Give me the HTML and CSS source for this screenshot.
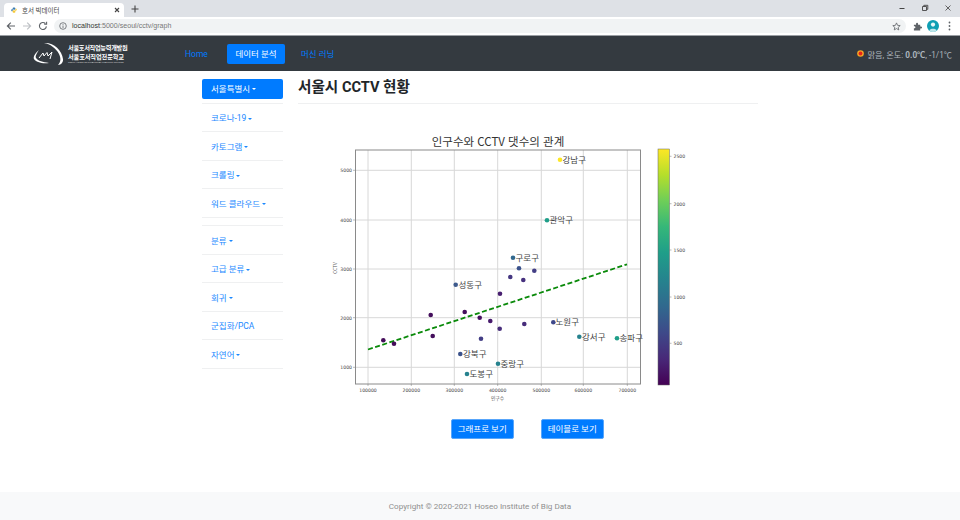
FILE: index.html
```html
<!DOCTYPE html>
<html lang="ko">
<head>
  <meta charset="UTF-8" />
  <title>호서 빅데이터</title>
  <link rel="stylesheet" href="styles.css">
</head>
<body>
  <div class="tabstrip">
    <div class="tab">
      <svg class="favicon" width="6" height="6" viewBox="0 0 8 8">
        <path d="M4 0.5C2.6 0.5 2.2 1 2.2 1.8V2.6H4.2V3H1.4C0.6 3 0.3 3.6 0.3 4.2S0.6 5.6 1.4 5.6H2.2V4.6C2.2 4 2.7 3.6 3.2 3.6H5C5.5 3.6 5.8 3.2 5.8 2.8V1.8C5.8 1 5.2 0.5 4 0.5Z" fill="#3b7cb0"/>
        <path d="M4 7.5C5.4 7.5 5.8 7 5.8 6.2V5.4H3.8V5H6.6C7.4 5 7.7 4.4 7.7 3.8S7.4 2.4 6.6 2.4H6V3.4C6 4 5.4 4.4 4.9 4.4H3C2.5 4.4 2.2 4.8 2.2 5.2V6.2C2.2 7 2.8 7.5 4 7.5Z" fill="#f5c93a"/>
      </svg>
      <span class="tab-title">호서 빅데이터</span>
      <svg class="tab-close" width="6" height="6" viewBox="0 0 6 6"><path d="M1 1L5 5M5 1L1 5" stroke="#444" stroke-width="1.1"/></svg>
    </div>
    <svg class="new-tab" width="8" height="8" viewBox="0 0 8 8"><path d="M4 0.5V7.5M0.5 4H7.5" stroke="#444" stroke-width="1.1"/></svg>
    <div class="win-controls">
      <svg width="8" height="8" viewBox="0 0 8 8"><path d="M1.5 4.5H6.5" stroke="#444"/></svg>
      <svg width="8" height="8" viewBox="0 0 8 8"><path d="M1.5 2.5H5.5V6.5H1.5ZM2.8 2.5V1.3H6.8V5.3H5.5" fill="none" stroke="#444" stroke-width="0.9"/></svg>
      <svg width="8" height="8" viewBox="0 0 8 8"><path d="M1.5 1.5L6.5 6.5M6.5 1.5L1.5 6.5" stroke="#555" stroke-width="0.9"/></svg>
    </div>
  </div>

  <div class="toolbar">
    <svg class="tool-icon" width="10" height="10" viewBox="0 0 10 10"><path d="M9 5H1.6M4.8 1.6L1.4 5L4.8 8.4" fill="none" stroke="#5f6368" stroke-width="1.2"/></svg>
    <svg class="tool-icon" width="10" height="10" viewBox="0 0 10 10"><path d="M1 5H8.4M5.2 1.6L8.6 5L5.2 8.4" fill="none" stroke="#bfc2c6" stroke-width="1.2"/></svg>
    <svg class="tool-icon" width="10" height="10" viewBox="0 0 10 10"><path d="M8.4 5.4A3.5 3.5 0 1 1 7.4 2.5M8.6 0.8V3.2H6.2" fill="none" stroke="#5f6368" stroke-width="1.1"/></svg>
    <div class="address">
      <svg width="8" height="8" viewBox="0 0 8 8"><circle cx="4" cy="4" r="3.3" fill="none" stroke="#5f6368" stroke-width="0.8"/><path d="M4 3.5V6M4 2V2.8" stroke="#5f6368" stroke-width="0.8"/></svg>
      <span class="url"><b>localhost</b>:5000/seoul/cctv/graph</span>
      <svg class="star" width="9" height="9" viewBox="0 0 10 10"><path d="M5 1L6.2 3.7L9.1 4L6.9 5.9L7.5 8.8L5 7.3L2.5 8.8L3.1 5.9L0.9 4L3.8 3.7Z" fill="none" stroke="#5f6368" stroke-width="0.9"/></svg>
    </div>
    <svg class="tool-right" width="9" height="9" viewBox="0 0 10 10"><path d="M1 3H3.4V2A1.1 1.1 0 0 1 5.6 2V3H8V5H9A1.1 1.1 0 0 1 9 7.2H8V9.4H1V7H2A1.2 1.2 0 0 0 2 4.8H1Z" fill="#5f6368"/></svg>
    <svg class="avatar" width="12" height="12" viewBox="0 0 12 12"><circle cx="6" cy="6" r="6" fill="#0f9fb3"/><circle cx="6" cy="4.6" r="2.1" fill="#e8f6f8"/><path d="M2.2 10.4C3 8.2 9 8.2 9.8 10.4A6 6 0 0 1 2.2 10.4Z" fill="#bfe6ea"/></svg>
    <svg class="menu-dots" width="3" height="10" viewBox="0 0 3 10"><circle cx="1.5" cy="1.5" r="0.9" fill="#5f6368"/><circle cx="1.5" cy="5" r="0.9" fill="#5f6368"/><circle cx="1.5" cy="8.5" r="0.9" fill="#5f6368"/></svg>
  </div>

  <nav class="navbar">
    <a class="brand" href="#">
      <svg width="31" height="24" viewBox="0 0 31 24">
        <path d="M11 1C20 0 29 8 30 17C30.500 20 28 23 25 23C28 20 28 16 26 12C23 6 17 2 11 1Z" fill="#fff"/>
        <path d="M6 8C2 11 0 15 1 17C3 20 9 22 16 21C10 20 5 19 3 16C2 14 4 11 6 8Z" fill="#fff"/>
        <path d="M6 16L10 11L11 14L14 10.500L15 14L19 10L17 17" fill="none" stroke="#fff" stroke-width="1"/>
      </svg>
      <span class="brand-text">
        <span class="brand-line">서울호서직업능력개발원</span>
        <span class="brand-line brand-line-wide">서울호서직업전문학교</span>
        <span class="brand-small">SEOUL HOSEO OCCUPATIONAL TRAINING COLLEGE</span>
      </span>
    </a>
    <a class="nav-link nav-home" href="#">Home</a>
    <a class="nav-link nav-active" href="#">데이터 분석</a>
    <a class="nav-link" href="#">머신 러닝</a>
    <div class="weather">
      <svg width="7" height="7" viewBox="0 0 8 8"><circle cx="4" cy="4" r="3.8" fill="#f5a623"/><circle cx="4" cy="4" r="2.2" fill="#e5231b"/></svg>
      <span>맑음, 온도: <b>0.0℃</b>, -1/1℃</span>
    </div>
  </nav>

  <div class="container">
    <aside class="sidebar">
      <ul class="side-group">
        <li class="side-item side-first"><a class="side-active caret" href="#">서울특별시</a></li>
        <li class="side-item"><a class="caret" href="#">코로나-19</a></li>
        <li class="side-item"><a class="caret" href="#">카토그램</a></li>
        <li class="side-item"><a class="caret" href="#">크롤링</a></li>
        <li class="side-item"><a class="caret" href="#">워드 클라우드</a></li>
      </ul>
      <ul class="side-group side-second">
        <li class="side-item"><a class="caret" href="#">분류</a></li>
        <li class="side-item"><a class="caret" href="#">고급 분류</a></li>
        <li class="side-item"><a class="caret" href="#">회귀</a></li>
        <li class="side-item"><a href="#">군집화/PCA</a></li>
        <li class="side-item"><a class="caret" href="#">자연어</a></li>
      </ul>
    </aside>

    <main class="content">
      <h1 class="page-title">서울시 CCTV 현황</h1>

      <svg class="chart" width="400" height="274" viewBox="328 130 400 274">
        <defs>
          <linearGradient id="viridis" x1="0" y1="1" x2="0" y2="0">
            <stop offset="0" stop-color="#440154"/>
            <stop offset="0.11" stop-color="#482878"/>
            <stop offset="0.22" stop-color="#3e4989"/>
            <stop offset="0.33" stop-color="#31688e"/>
            <stop offset="0.44" stop-color="#26828e"/>
            <stop offset="0.56" stop-color="#1f9e89"/>
            <stop offset="0.67" stop-color="#35b779"/>
            <stop offset="0.78" stop-color="#6ece58"/>
            <stop offset="0.89" stop-color="#b5de2b"/>
            <stop offset="1" stop-color="#fde725"/>
          </linearGradient>
        </defs>

        <text class="chart-title" x="498" y="146" text-anchor="middle">인구수와 CCTV 댓수의 관계</text>

        <g class="grid">
          <path d="M368 150V384M411.300 150V384M454.300 150V384M497.700 150V384M541.300 150V384M583.300 150V384M627.300 150V384"/>
          <path d="M355 170.300H640M355 220H640M355 269H640M355 317.700H640M355 367.300H640"/>
        </g>
        <rect class="frame" x="355.500" y="150" width="285" height="234"/>
        <path class="ticks" d="M368 384V386M411.300 384V386M454.300 384V386M497.700 384V386M541.300 384V386M583.300 384V386M627.300 384V386M353 170.300H355M353 220H355M353 269H355M353 317.700H355M353 367.300H355"/>

        <g class="tick-label" text-anchor="middle">
          <text x="368" y="392">100000</text>
          <text x="411.300" y="392">200000</text>
          <text x="454.300" y="392">300000</text>
          <text x="497.700" y="392">400000</text>
          <text x="541.300" y="392">500000</text>
          <text x="583.300" y="392">600000</text>
          <text x="627.300" y="392">700000</text>
        </g>
        <g class="tick-label" text-anchor="end">
          <text x="352" y="172">5000</text>
          <text x="352" y="222">4000</text>
          <text x="352" y="271">3000</text>
          <text x="352" y="319.500">2000</text>
          <text x="352" y="369">1000</text>
        </g>
        <text class="axis-label" x="497.500" y="399.500" text-anchor="middle">인구수</text>
        <text class="axis-label" x="0" y="0" text-anchor="middle" transform="translate(336.500 268) rotate(-90)">CCTV</text>

        <line class="trend" x1="368" y1="349.500" x2="627" y2="264.300"/>

        <g>
          <circle cx="560" cy="159.700" r="2.300" fill="#fde725"/>
          <circle cx="547" cy="220.300" r="2.300" fill="#1f9e89"/>
          <circle cx="513" cy="257.700" r="2.300" fill="#31688e"/>
          <circle cx="519" cy="268.300" r="2.300" fill="#3b528b"/>
          <circle cx="534.300" cy="270.700" r="2.300" fill="#433e85"/>
          <circle cx="510.300" cy="277" r="2.300" fill="#453781"/>
          <circle cx="523.300" cy="280" r="2.300" fill="#46307e"/>
          <circle cx="455.700" cy="284.700" r="2.300" fill="#3e5a8c"/>
          <circle cx="500" cy="293.700" r="2.300" fill="#481f70"/>
          <circle cx="430.700" cy="315" r="2.300" fill="#440f5c"/>
          <circle cx="464.700" cy="312" r="2.300" fill="#440f5c"/>
          <circle cx="479.700" cy="317.700" r="2.300" fill="#46105f"/>
          <circle cx="490.300" cy="321" r="2.300" fill="#471a6c"/>
          <circle cx="499.700" cy="328.700" r="2.300" fill="#472d7b"/>
          <circle cx="524.300" cy="324" r="2.300" fill="#472d7b"/>
          <circle cx="553.300" cy="322.300" r="2.300" fill="#3f4889"/>
          <circle cx="432.700" cy="336" r="2.300" fill="#440f5c"/>
          <circle cx="481" cy="338.700" r="2.300" fill="#433e85"/>
          <circle cx="383.300" cy="340.300" r="2.300" fill="#450d5a"/>
          <circle cx="394" cy="343.700" r="2.300" fill="#450d5a"/>
          <circle cx="579.300" cy="336.700" r="2.300" fill="#26828e"/>
          <circle cx="617" cy="338.300" r="2.300" fill="#1f9e89"/>
          <circle cx="460.300" cy="354" r="2.300" fill="#3b528b"/>
          <circle cx="498" cy="363.700" r="2.300" fill="#26828e"/>
          <circle cx="467" cy="374" r="2.300" fill="#26828e"/>
        </g>

        <g class="point-label">
          <text x="562.500" y="162.500">강남구</text>
          <text x="549.500" y="223">관악구</text>
          <text x="515.500" y="260.500">구로구</text>
          <text x="458.500" y="287.500">성동구</text>
          <text x="555.500" y="325">노원구</text>
          <text x="582" y="339.500">강서구</text>
          <text x="619.500" y="341">송파구</text>
          <text x="463" y="356.500">강북구</text>
          <text x="500.500" y="366.500">중랑구</text>
          <text x="469.500" y="376.500">도봉구</text>
        </g>

        <rect x="658" y="149" width="11.500" height="236" fill="url(#viridis)" stroke="#666" stroke-width="0.5"/>
        <path class="ticks" d="M669.500 156.300H671.500M669.500 203.700H671.500M669.500 250H671.500M669.500 297H671.500M669.500 343.300H671.500"/>
        <g class="tick-label">
          <text x="673.500" y="158">2500</text>
          <text x="673.500" y="205.500">2000</text>
          <text x="673.500" y="252">1500</text>
          <text x="673.500" y="299">1000</text>
          <text x="673.500" y="345">500</text>
        </g>
      </svg>

      <div class="chart-buttons">
        <a class="btn" href="#">그래프로 보기</a>
        <a class="btn" href="#">테이블로 보기</a>
      </div>
    </main>
  </div>

  <footer class="footer">Copyright © 2020-2021 Hoseo Institute of Big Data</footer>
</body>
</html>
```

FILE: styles.css
```css
* {
  box-sizing: border-box;
}
html, body {
  margin: 0;
  height: 520px;
  overflow: hidden;
}
body {
  display: flex;
  flex-direction: column;
  background: #fff;
  font-family: Roboto, "Noto Sans CJK KR", sans-serif;
  font-size: 8.5px;
  color: #212529;
}
a {
  text-decoration: none;
}

/* browser frame */
.tabstrip {
  display: flex;
  align-items: flex-end;
  height: 17px;
  padding-left: 4px;
  background: #dee1e6;
}
.tab {
  display: flex;
  align-items: center;
  width: 120px;
  height: 14px;
  padding: 0 4px 0 7px;
  background: #fff;
  border-radius: 4px 4px 0 0;
}
.tab-title {
  margin-left: 5px;
  font-size: 6.5px;
  color: #444;
}
.tab-close {
  margin-left: auto;
}
.new-tab {
  margin: 0 0 4px 7px;
}
.win-controls {
  display: flex;
  gap: 15px;
  margin: 0 8px 5px auto;
}
.toolbar {
  display: flex;
  align-items: center;
  height: 19px;
  padding-left: 6px;
  background: #fff;
  border-bottom: 1px solid #9a9ea3;
}
.tool-icon {
  margin-right: 6px;
}
.address {
  display: flex;
  align-items: center;
  width: 852px;
  height: 14px;
  padding: 0 5px;
  background: #f1f3f4;
  border-radius: 7px;
}
.url {
  margin-left: 5px;
  font-family: "Liberation Sans", sans-serif;
  font-size: 7.1px;
  color: #777;
}
.url b {
  font-weight: normal;
  color: #333;
}
.star {
  margin-left: auto;
}
.tool-right {
  margin-left: 6.5px;
}
.avatar {
  margin-left: 5.5px;
}
.menu-dots {
  margin-left: 8.5px;
}

/* navbar */
.navbar {
  display: flex;
  align-items: center;
  height: 35px;
  background: #343a40;
}
.brand {
  display: flex;
  align-items: center;
  gap: 4px;
  margin-left: 33px;
  color: #fff;
}
.brand-text {
  display: flex;
  flex-direction: column;
  width: 60px;
}
.brand-line {
  font-family: "Noto Sans CJK KR", sans-serif;
  font-size: 6.2px;
  font-weight: 700;
  line-height: 9px;
  letter-spacing: -0.3px;
  white-space: nowrap;
}
.brand-line-wide {
  letter-spacing: -0.1px;
}
.brand-small {
  font-size: 2.4px;
  line-height: 4px;
  white-space: nowrap;
  color: #ccc;
}
.nav-link {
  margin-left: 8px;
  padding: 0 8px;
  font-size: 8.5px;
  line-height: 20px;
  color: #007bff;
  border-radius: 2px;
}
.nav-home {
  width: 38px;
  margin-left: 49px;
}
.nav-active {
  margin-left: 12px;
  width: 58px;
  padding: 0;
  text-align: center;
  color: #fff;
  background: #007bff;
}
.weather {
  display: flex;
  align-items: center;
  gap: 4px;
  margin-left: auto;
  margin-right: 8px;
  font-size: 8.2px;
  color: #adb5bd;
}

/* page */
.container {
  display: flex;
  gap: 15px;
  width: 556px;
  margin: 0 auto;
}
.sidebar {
  width: 81px;
  flex: none;
}
.side-group {
  margin: 0;
  padding: 0;
  list-style: none;
}
.side-second {
  margin-top: 7.5px;
  border-top: 1px solid #eff0f1;
}
.side-item {
  display: flex;
  align-items: center;
  height: 28.5px;
  border-bottom: 1px solid #eff0f1;
}
.side-item a {
  padding-left: 9px;
  color: #1a88ff;
}
.side-first {
  height: 32.5px;
  padding: 8px 0 4px;
}
.side-item .side-active {
  display: block;
  width: 100%;
  line-height: 20px;
  color: #fff;
  background: #007bff;
  border-radius: 2px;
}
.caret::after {
  content: "";
  display: inline-block;
  margin-left: 2px;
  vertical-align: 1.5px;
  border-top: 2.5px solid currentColor;
  border-left: 2.5px solid transparent;
  border-right: 2.5px solid transparent;
}
.content {
  flex: 1;
  display: flex;
  flex-direction: column;
}
.page-title {
  margin: 0;
  height: 33px;
  padding-top: 5px;
  font-size: 14.6px;
  font-weight: 700;
  line-height: 22px;
  border-bottom: 1px solid #eff0f1;
}
.chart {
  display: block;
  margin: 26px 0 0 30px;
  font-family: "Noto Sans CJK KR", sans-serif;
}
.chart-title {
  font-size: 11.5px;
  fill: #333;
}
.grid path {
  fill: none;
  stroke: #d8d8d8;
  stroke-width: 1;
}
.frame {
  fill: none;
  stroke: #8a8a8a;
  stroke-width: 1;
}
.ticks {
  fill: none;
  stroke: #777;
  stroke-width: 0.5;
}
.tick-label {
  font-family: "DejaVu Sans", sans-serif;
  font-size: 4.6px;
  fill: #444;
}
.axis-label {
  font-size: 4.8px;
  fill: #555;
}
.trend {
  stroke: #0a8a0a;
  stroke-width: 1.800;
  stroke-dasharray: 5 2.500;
}
.point-label {
  font-size: 8.5px;
  fill: #444;
}
.chart-buttons {
  display: flex;
  justify-content: center;
  gap: 27px;
  margin: 15px 1.5px 0 0;
}
.btn {
  width: 63px;
  height: 20px;
  font-size: 8.5px;
  line-height: 19px;
  text-align: center;
  color: #fff;
  background: #007bff;
  border: 1px solid #58a6fb;
  border-radius: 2px;
}
.footer {
  margin-top: auto;
  height: 28px;
  font-size: 8.1px;
  line-height: 28px;
  text-align: center;
  color: #8f8f8f;
  background: #f8f9fa;
}
```
